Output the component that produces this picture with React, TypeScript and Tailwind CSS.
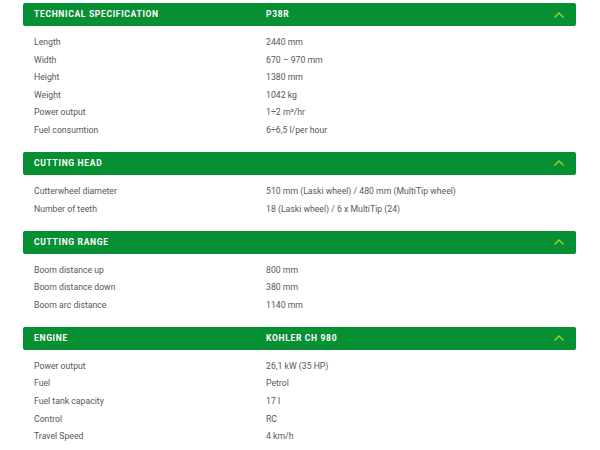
import React from "react";

type Section = { title: string; model?: string; rows: [string, string][] };

const sections: Section[] = [
  {
    title: "TECHNICAL SPECIFICATION",
    model: "P38R",
    rows: [
      ["Length", "2440 mm"],
      ["Width", "670 – 970 mm"],
      ["Height", "1380 mm"],
      ["Weight", "1042 kg"],
      ["Power output", "1÷2 m³/hr"],
      ["Fuel consumtion", "6÷6,5 l/per hour"],
    ],
  },
  {
    title: "CUTTING HEAD",
    rows: [
      ["Cutterwheel diameter", "510 mm (Laski wheel) / 480 mm (MultiTip wheel)"],
      ["Number of teeth", "18 (Laski wheel) / 6 x MultiTip (24)"],
    ],
  },
  {
    title: "CUTTING RANGE",
    rows: [
      ["Boom distance up", "800 mm"],
      ["Boom distance down", "380 mm"],
      ["Boom arc distance", "1140 mm"],
    ],
  },
  {
    title: "ENGINE",
    model: "KOHLER CH 980",
    rows: [
      ["Power output", "26,1 kW (35 HP)"],
      ["Fuel", "Petrol"],
      ["Fuel tank capacity", "17 l"],
      ["Control", "RC"],
      ["Travel Speed", "4 km/h"],
    ],
  },
];

function Chevron() {
  return (
    <svg width="12" height="8" viewBox="0 0 12 8" className="block">
      <path d="M1.5 6.5 L6 2 L10.5 6.5" fill="none" stroke="#9ed62a" strokeWidth="1.4" />
    </svg>
  );
}

export default function App() {
  return (
    <div
      className="w-[600px] h-[450px] bg-white overflow-hidden pt-[3px] pl-[23px] pr-[24px]"
      style={{ fontFamily: "Roboto, 'Liberation Sans', sans-serif" }}
    >
      {sections.map((s) => (
        <div key={s.title}>
          <div className="h-[23px] bg-[#078f33] rounded-[2px] flex items-center pl-[11px] pr-[11px]">
            <div className="w-[232px] text-white text-[8.5px] font-bold tracking-[0.08em]">{s.title}</div>
            <div className="flex-1 text-white text-[8.5px] font-bold tracking-[0.08em]">{s.model ?? ""}</div>
            <Chevron />
          </div>
          <div className="pt-[7.8px] pb-[12.6px] pl-[11px]">
            {s.rows.map(([k, v], i) => (
              <div key={i} className="h-[17.6px] flex items-center text-[8.7px] text-[#585858]">
                <div className="w-[232px]">{k}</div>
                <div>{v}</div>
              </div>
            ))}
          </div>
        </div>
      ))}
    </div>
  );
}
